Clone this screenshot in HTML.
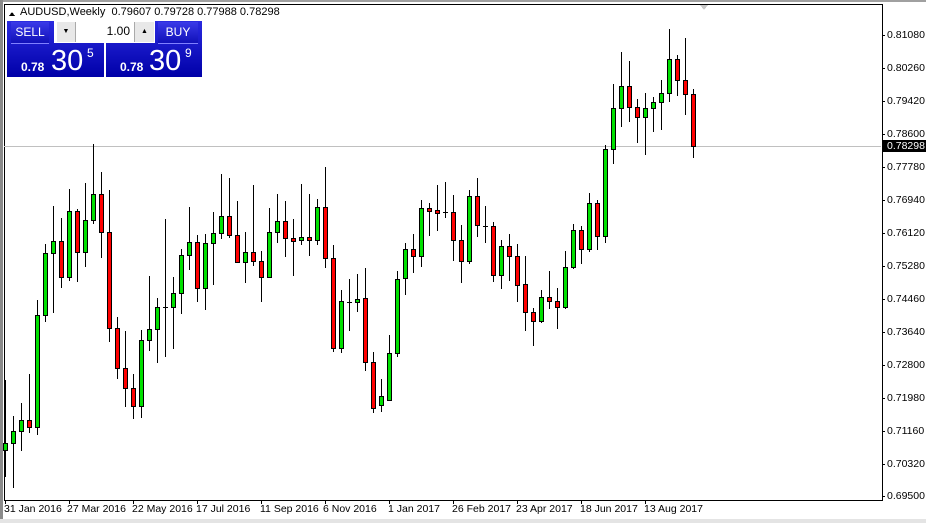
<!DOCTYPE html>
<html><head><meta charset="utf-8"><style>
*{margin:0;padding:0}
body{width:926px;height:523px;background:#fff;position:relative;overflow:hidden;font-family:"Liberation Sans",sans-serif;font-size:11px;color:#000}
.t{position:absolute;white-space:nowrap;line-height:12px}
.pl{position:absolute;left:887px;font-size:10.5px;line-height:12px}
.dl{position:absolute;top:503px;font-size:10.5px;line-height:12px;white-space:nowrap}
.blk{position:absolute;background:linear-gradient(#2a2ae0,#0000a8);color:#fff}
.btn{position:absolute;background:linear-gradient(#3a3ae8,#1010b8);color:#fff;font-size:12px;text-align:center;line-height:21px;border-bottom:1px solid #8080ff}
</style></head><body>
<div style="position:absolute;left:0;top:0;width:926px;height:2px;background:#a0a0a0"></div>
<div style="position:absolute;left:0;top:0;width:3px;height:523px;background:#8a8a8a"></div>
<div style="position:absolute;left:0;top:519px;width:926px;height:4px;background:#e4e4e4"></div>
<svg width="926" height="523" style="position:absolute;left:0;top:0" shape-rendering="crispEdges" id="s">
<rect x="4" y="4" width="878" height="496" fill="none" stroke="#000" stroke-width="1" transform="translate(0.5,0.5)"/>
<rect x="4" y="146" width="877" height="1" fill="#c0c0c0"/>
<polygon points="700,5 708,5 704,10" fill="#c8c8c8"/>
<polygon points="9,16 15,16 12,12" fill="#000"/>
</svg>
<div class="t" style="left:20px;top:6px;font-size:11px">AUDUSD,Weekly&nbsp; 0.79607 0.79728 0.77988 0.78298</div>
<div class="blk" style="left:7px;top:21px;width:97px;height:56px"></div>
<div class="blk" style="left:106px;top:21px;width:96px;height:56px"></div>
<div style="position:absolute;left:54px;top:21px;width:101px;height:22px;background:#fff"></div>
<div style="position:absolute;left:57px;top:22px;width:18px;height:20px;background:#e8e8e8;border-right:1px solid #aaa;font-size:7px;text-align:center;line-height:20px">▼</div>
<div style="position:absolute;left:134px;top:22px;width:19px;height:20px;background:#e8e8e8;border-left:1px solid #aaa;font-size:7px;text-align:center;line-height:20px">▲</div>
<div class="t" style="left:76px;top:25px;width:54px;text-align:right;font-size:12px">1.00</div>
<div class="btn" style="left:11px;top:22px;width:38px;height:21px">SELL</div>
<div class="btn" style="left:158px;top:22px;width:40px;height:21px">BUY</div>
<div class="t" style="left:21px;top:61px;color:#fff;font-weight:bold;font-size:12px">0.78</div>
<div class="t" style="left:51px;top:46px;color:#fff;font-size:29px;line-height:30px">30</div>
<div class="t" style="left:87px;top:47px;color:#fff;font-size:12px">5</div>
<div class="t" style="left:120px;top:61px;color:#fff;font-weight:bold;font-size:12px">0.78</div>
<div class="t" style="left:149px;top:46px;color:#fff;font-size:29px;line-height:30px">30</div>
<div class="t" style="left:185px;top:47px;color:#fff;font-size:12px">9</div>
<div class="pl" style="top:29px">0.81080</div>
<div class="pl" style="top:62px">0.80260</div>
<div class="pl" style="top:95px">0.79420</div>
<div class="pl" style="top:128px">0.78600</div>
<div class="pl" style="top:161px">0.77780</div>
<div class="pl" style="top:194px">0.76940</div>
<div class="pl" style="top:227px">0.76120</div>
<div class="pl" style="top:260px">0.75280</div>
<div class="pl" style="top:293px">0.74460</div>
<div class="pl" style="top:326px">0.73640</div>
<div class="pl" style="top:359px">0.72800</div>
<div class="pl" style="top:392px">0.71980</div>
<div class="pl" style="top:425px">0.71160</div>
<div class="pl" style="top:458px">0.70320</div>
<div class="pl" style="top:490px">0.69500</div>
<div class="pl" style="top:140px;left:883px;background:#000;color:#fff;padding:0 2px 0 4px;height:12px">0.78298</div>
<div class="dl" style="left:4px">31 Jan 2016</div>
<div class="dl" style="left:67px">27 Mar 2016</div>
<div class="dl" style="left:132px">22 May 2016</div>
<div class="dl" style="left:196px">17 Jul 2016</div>
<div class="dl" style="left:260px">11 Sep 2016</div>
<div class="dl" style="left:323px">6 Nov 2016</div>
<div class="dl" style="left:388px">1 Jan 2017</div>
<div class="dl" style="left:452px">26 Feb 2017</div>
<div class="dl" style="left:516px">23 Apr 2017</div>
<div class="dl" style="left:580px">18 Jun 2017</div>
<div class="dl" style="left:644px">13 Aug 2017</div>
<script>
var C=[
[1,443,450,380,477],[1,431,443,416,488],[1,420,431,403,451],[0,420,427,374,433],[1,315,427,300,435],
[1,253,315,244,322],[1,241,253,206,313],[0,241,277,218,288],[1,211,277,189,281],[0,211,252,209,282],
[1,220,252,183,267],[1,194,220,144,224],[0,194,232,172,258],[0,232,328,190,342],[0,328,368,317,379],
[0,368,388,331,407],[0,388,406,374,419],[1,340,406,330,418],[1,329,340,276,351],[1,307,329,298,363],
[2,307,307,219,357],[1,293,307,277,349],[1,255,293,249,314],[1,242,255,207,270],[0,242,288,235,302],
[1,243,288,234,310],[1,233,243,212,285],[1,216,233,174,239],[0,216,235,178,238],[0,235,262,201,262],
[1,252,262,232,283],[0,252,261,185,266],[0,261,277,251,302],[1,232,277,208,277],[1,221,232,194,243],
[0,221,238,201,257],[0,238,240,219,276],[1,237,240,184,245],[0,237,239,194,256],[1,207,240,199,245],
[0,207,258,167,268],[0,258,348,245,352],[1,301,348,290,353],[2,302,302,279,331],[1,299,302,274,312],
[0,298,362,268,371],[0,362,408,352,413],[1,396,405,379,412],[1,353,400,335,400],[1,279,353,271,357],
[1,249,278,243,295],[0,249,256,234,273],[1,208,256,200,267],[0,208,210,203,236],[0,210,212,185,231],
[2,212,212,182,218],[0,212,240,195,261],[0,240,261,225,283],[1,196,261,190,264],[0,196,225,178,237],
[2,226,226,206,243],[0,226,275,222,282],[1,246,275,240,289],[0,246,256,234,281],[0,256,285,244,302],
[0,284,312,256,331],[0,312,321,308,346],[1,297,321,290,323],[0,297,301,271,309],[0,301,307,288,329],
[1,267,307,251,309],[1,230,267,224,269],[0,230,249,226,264],[1,203,249,193,252],[0,203,236,200,250],
[1,149,236,145,243],[1,108,149,84,164],[1,86,108,52,127],[0,86,107,61,122],[0,107,117,99,143],
[1,108,117,93,155],[1,102,108,97,132],[1,93,102,80,130],[1,59,93,29,102],[0,59,80,55,96],
[0,80,94,38,115],[0,94,146,89,158]];
var s=document.getElementById('s'),h='';
for(var k=0;k<11;k++){var tx=5+64*k;h+='<rect x="'+tx+'" y="500" width="1" height="4" fill="#000"/>';}
for(var k=0;k<15;k++){var ty=[35,68,101,134,167,200,233,266,299,332,365,398,431,464,496][k];h+='<rect x="882" y="'+ty+'" width="3" height="1" fill="#000"/>';}
for(var i=0;i<C.length;i++){var c=C[i],x=5+8*i;
h+='<rect x="'+x+'" y="'+c[3]+'" width="1" height="'+(c[4]-c[3])+'" fill="#000"/>';
if(c[0]==2){h+='<rect x="'+(x-2)+'" y="'+c[1]+'" width="5" height="1" fill="#000"/>';}
else{var hh=Math.max(c[2]-c[1],3);h+='<rect x="'+(x-2)+'" y="'+c[1]+'" width="5" height="'+(hh+1)+'" fill="#000"/>';
h+='<rect x="'+(x-1)+'" y="'+(c[1]+1)+'" width="3" height="'+(hh-1)+'" fill="'+(c[0]?'#00e000':'#ff0000')+'"/>';}}
s.insertAdjacentHTML('beforeend',h);
</script>
</body></html>
